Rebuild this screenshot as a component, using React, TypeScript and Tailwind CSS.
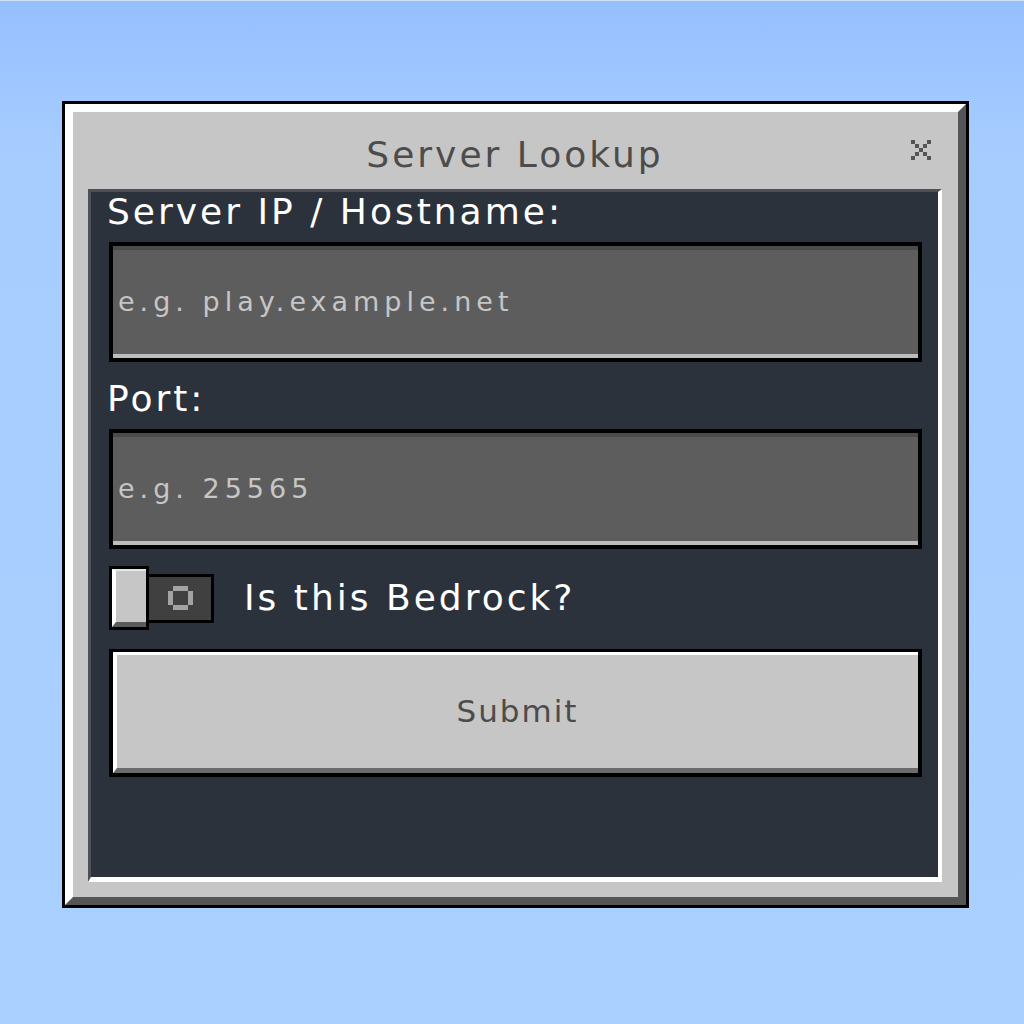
const font = "font-['DejaVu_Sans',sans-serif]";

const CloseIcon = () => (
  <svg width="20" height="20" viewBox="0 0 5 5" shapeRendering="crispEdges" className="fill-[#555555]">
    <rect x="0" y="0" width="1" height="1" />
    <rect x="4" y="0" width="1" height="1" />
    <rect x="1" y="1" width="1" height="1" />
    <rect x="3" y="1" width="1" height="1" />
    <rect x="2" y="2" width="1" height="1" />
    <rect x="1" y="3" width="1" height="1" />
    <rect x="3" y="3" width="1" height="1" />
    <rect x="0" y="4" width="1" height="1" />
    <rect x="4" y="4" width="1" height="1" />
  </svg>
);

const RingIcon = () => (
  <svg width="25" height="24" viewBox="0 0 25 24" shapeRendering="crispEdges" className="fill-[#a3a3a3]">
    <rect x="5" y="0" width="15" height="5" />
    <rect x="0" y="5" width="5" height="14" />
    <rect x="20" y="5" width="5" height="14" />
    <rect x="5" y="19" width="15" height="5" />
  </svg>
);

const Field = ({ placeholder, h }: { placeholder: string; h: string }) => (
  <div className={`${h} border-4 border-black`}>
    <div className="h-full flex items-center bg-[#5d5d5d] border-t-4 border-t-[#4b4b4b] border-b-4 border-b-[#bdbdbd]">
      <input
        type="text"
        placeholder={placeholder}
        className={`w-full bg-transparent outline-none pl-[5px] text-[27px] tracking-[5px] text-white placeholder:text-[#c6c6c6] ${font}`}
      />
    </div>
  </div>
);

export default function App() {
  return (
    <div className={`min-h-screen w-full border-t border-t-[#d2e2f6] bg-linear-to-b from-[#96bfff] via-[#a7cdff] via-15% to-[#aad0ff] pt-[100px] pl-[62px] ${font}`}>
      <div className="w-[907px] h-[807px] border-[3px] border-black">
        <div className="h-full border-8 border-t-white border-l-white border-r-[#555555] border-b-[#555555]">
          <div className="h-full flex flex-col bg-[#c6c6c6] pl-[15px] pr-[16px] pb-[15px]">
            <div className="relative h-[77px] shrink-0 pt-[8px] flex items-center justify-center">
              <h1 className="text-[36px] leading-none tracking-[3px] text-[#4c4c4c]">Server Lookup</h1>
              <button className="absolute right-[11px] top-[28px]">
                <CloseIcon />
              </button>
            </div>

            <div className="flex-1 bg-[#2b323c] border-t-[3px] border-l-[3px] border-t-[#4d5157] border-l-[#4d5157] border-r-4 border-b-[5px] border-r-white border-b-white pl-[18px] pr-[16px]">
              <div className="h-[50px] pb-[10px] flex items-center">
                <label className="-ml-[2px] text-[36px] leading-none tracking-[3px] text-white">Server IP / Hostname:</label>
              </div>
              <Field placeholder="e.g. play.example.net" h="h-[120px]" />

              <div className="h-[67px] pt-[7px] flex items-center">
                <label className="-ml-[2px] text-[36px] leading-none tracking-[3px] text-white">Port:</label>
              </div>
              <Field placeholder="e.g. 25565" h="h-[120px]" />

              <div className="mt-[17px] h-[64px] flex items-center">
                <div className="relative z-10 w-[40px] h-[64px] border-[3px] border-black">
                  <div className="h-full bg-[#c6c6c6] border-l-4 border-l-white border-t-2 border-t-[#e6e6e6] border-b-[5px] border-b-[#5b5b5b]" />
                </div>
                <div className="-ml-[4px] w-[69px] h-[49px] border-[3px] border-black bg-[#404040] flex items-center justify-center pl-[2px]">
                  <RingIcon />
                </div>
                <span className="ml-[30px] text-[36px] leading-none tracking-[3px] text-white">Is this Bedrock?</span>
              </div>

              <button className="mt-[19px] w-full h-[128px] border-4 border-t-[3px] border-black">
                <div className="h-full flex items-center justify-center bg-[#c6c6c6] border-t-[3px] border-l-4 border-t-white border-l-white border-b-[5px] border-b-[#6c6c6c]">
                  <span className="text-[31px] leading-none tracking-[2px] text-[#4c4c4c]">Submit</span>
                </div>
              </button>
            </div>
          </div>
        </div>
      </div>
    </div>
  );
}
